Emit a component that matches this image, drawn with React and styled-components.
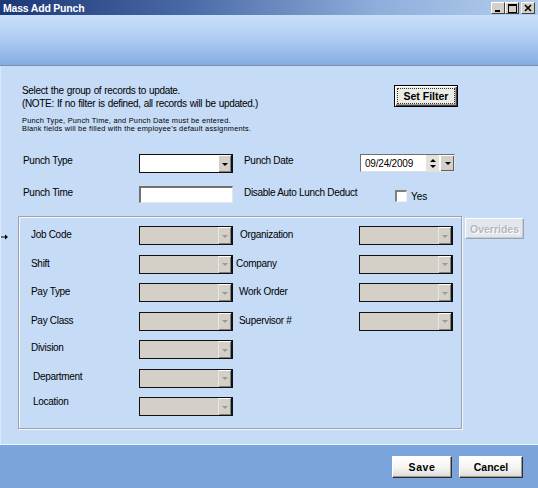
import React from "react";
import styled, { createGlobalStyle } from "styled-components";

const Global = createGlobalStyle`
  html, body { margin: 0; padding: 0; background: #c5dbf6; }
  body { width: 538px; height: 488px; overflow: hidden; font-family: "Liberation Sans", Arial, sans-serif; }
  * { box-sizing: border-box; }
`;

const Window = styled.div`
  width: 538px;
  height: 488px;
  display: flex;
  flex-direction: column;
  background: #c5dbf6;
  position: relative;
`;

const TitleBar = styled.div`
  height: 15px;
  flex: none;
  display: flex;
  align-items: center;
  justify-content: space-between;
  padding: 0 3px 0 3px;
  background: linear-gradient(90deg, #1b3778 0%, #4a6aa6 35%, #8eaedb 70%, #b3cdee 100%);
`;

const Title = styled.span`
  color: #fff;
  font-weight: bold;
  font-size: 10.5px;
  letter-spacing: -0.2px;
`;

const Controls = styled.div`
  display: flex;
  margin-top: 1px;
`;

const CtlBtn = styled.div`
  width: 14px;
  height: 12px;
  margin-left: ${(p) => (p.$gap ? "2px" : "0")};
  background: #d4d0c8;
  border-top: 1px solid #fff;
  border-left: 1px solid #fff;
  border-right: 1px solid #404040;
  border-bottom: 1px solid #404040;
  display: flex;
  align-items: center;
  justify-content: center;
`;

const Banner = styled.div`
  height: 51px;
  flex: none;
  background: linear-gradient(180deg, #c9dffa 0%, #b1cdf2 45%, #86ade2 100%);
  border-bottom: 1px solid #7d8fa6;
`;

const Body = styled.div`
  height: 378px;
  flex: none;
  position: relative;
  padding: 19px 0 0 17px;
  display: flex;
  flex-direction: column;
  border-left: 1px solid #dce9fa;
`;

const IntroRow = styled.div`
  display: grid;
  grid-template-columns: 372px auto;
  align-items: start;
  padding-left: 4px;
`;

const Intro = styled.div`
  color: #000;
`;

const Para = styled.div`
  font-size: 10px;
  line-height: 12.5px;
  letter-spacing: -0.34px;
  word-spacing: 0.6px;
`;

const Small = styled.div`
  margin-top: 7px;
  font-size: 7.4px;
  line-height: 7.5px;
  letter-spacing: 0.22px;
`;

const RaisedButton = styled.button`
  font-family: "Liberation Sans", Arial, sans-serif;
  font-weight: bold;
  font-size: 10.5px;
  padding: 0;
  width: ${(p) => p.$w}px;
  height: ${(p) => p.$h}px;
  margin: ${(p) => p.$m || "0"};
  color: ${(p) => (p.disabled ? "#b4b8bc" : "#000")};
  text-shadow: ${(p) => (p.disabled ? "1px 1px 0 #fff" : "none")};
  background: ${(p) =>
    p.disabled ? "#e2e7ee" : "linear-gradient(180deg, #ffffff 0%, #f4f4f2 55%, #dddbd6 100%)"};
  border-top: 1px solid #fff;
  border-left: 1px solid #fff;
  border-right: 1px solid ${(p) => (p.disabled ? "#9aa4b0" : "#303030")};
  border-bottom: 1px solid ${(p) => (p.disabled ? "#9aa4b0" : "#303030")};
  box-shadow: ${(p) => (p.disabled ? "inset -1px -1px 0 #c8ccd2" : "inset -1px -1px 0 #9a9890")};
  letter-spacing: ${(p) => p.$ls || "0"};
`;

const FilterButton = styled.button`
  font-family: "Liberation Sans", Arial, sans-serif;
  font-weight: bold;
  font-size: 10.5px;
  width: 64px;
  height: 22px;
  padding: 2px;
  background: #ecebe6;
  border: 1px solid #000;
  box-shadow: inset 1px 1px 0 #fff, inset -1px -1px 0 #404040, inset -2px -2px 0 #a0a0a0;
  color: #000;
  display: flex;
`;

const Focus = styled.span`
  flex: 1;
  display: flex;
  align-items: center;
  justify-content: center;
  border: 1px dotted #333;
`;

const TopGrid = styled.div`
  margin-top: 22px;
  display: grid;
  grid-template-columns: 116px 94px 127px auto;
  row-gap: 13px;
  padding-left: 5px;
`;

const Label = styled.div`
  font-size: 10px;
  letter-spacing: -0.3px;
  color: #000;
  padding-left: ${(p) => p.$indent || 0}px;
  align-self: ${(p) => p.$align || "start"};
  position: relative;
  top: ${(p) => p.$dy || 0}px;
  white-space: nowrap;
  padding-top: ${(p) => (p.$align ? 0 : 1)}px;
`;

const SelectBox = styled.div`
  width: 94px;
  height: 19px;
  display: flex;
  background: ${(p) => (p.$disabled ? "#d4d0c8" : "#fff")};
  border: 1px solid #111;
  border-right-width: 2px;
`;

const SelectField = styled.div`
  flex: 1;
`;

const ArrowBtn = styled.div`
  width: 13px;
  flex: none;
  background: #d4d0c8;
  border-left: 1px solid ${(p) => (p.$disabled ? "#e8e6e0" : "#fff")};
  border-top: 1px solid #fff;
  display: flex;
  align-items: center;
  justify-content: center;
  box-shadow: inset -1px -1px 0 #808080;
`;

const Tri = styled.div`
  width: 0;
  height: 0;
  border-left: 3px solid transparent;
  border-right: 3px solid transparent;
  border-top: 3px solid ${(p) => (p.$disabled ? "#9a9a9a" : "#000")};
`;

const TriUp = styled.div`
  width: 0;
  height: 0;
  border-left: 3px solid transparent;
  border-right: 3px solid transparent;
  border-bottom: 3px solid #000;
`;

const TextInput = styled.div`
  width: 94px;
  height: 17px;
  background: #fff;
  border-top: 2px solid #707070;
  border-left: 2px solid #707070;
  border-right: 1px solid #e6e6e6;
  border-bottom: 1px solid #e6e6e6;
`;

const DateBox = styled.div`
  width: 95px;
  height: 18px;
  background: #fff;
  border-top: 1px solid #707070;
  border-left: 1px solid #707070;
  border-right: 1px solid #e0e0e0;
  border-bottom: 1px solid #e0e0e0;
  display: flex;
  align-items: center;
  padding-left: 4px;
`;

const DateText = styled.span`
  font-size: 10px;
  letter-spacing: -0.2px;
  flex: 1;
`;

const Spin = styled.div`
  width: 14px;
  height: 16px;
  display: flex;
  flex-direction: column;
  justify-content: space-around;
  align-items: center;
  background: #e4e2dc;
  border-left: 1px solid #fff;
  padding: 2px 0;
`;

const DateDrop = styled.div`
  width: 14px;
  height: 16px;
  margin-left: 1px;
  background: #d4d0c8;
  border-top: 1px solid #fff;
  border-left: 1px solid #fff;
  box-shadow: inset -1px -1px 0 #606060;
  display: flex;
  align-items: center;
  justify-content: center;
`;

const CheckRow = styled.div`
  display: flex;
  align-items: center;
  gap: 4px;
  margin-left: 35px;
  margin-top: 3px;
  font-size: 10px;
`;

const CheckBox = styled.div`
  width: 12px;
  height: 12px;
  background: #fff;
  border-top: 2px solid #808080;
  border-left: 2px solid #808080;
  border-right: 1px solid #f0f0f0;
  border-bottom: 1px solid #f0f0f0;
`;

const GroupRow = styled.div`
  margin-top: 13px;
  display: flex;
  align-items: flex-start;
`;

const GroupBox = styled.div`
  width: 444px;
  height: 213px;
  border: 1px solid #9aa3ad;
  box-shadow: inset 1px 1px 0 #f4f8fd, 1px 1px 0 #f4f8fd;
  padding: 9px 0 0 12px;
  display: grid;
  grid-template-columns: 108px 94px 126px 94px;
  grid-auto-rows: 19px;
  row-gap: 9.5px;
`;

const Marker = styled.svg`
  position: absolute;
  left: 0;
  top: 168px;
`;

const Footer = styled.div`
  flex: 1;
  border-top: 1px solid #eef5fe;
  background: #7ba3dc;
  display: flex;
  justify-content: flex-end;
  align-items: flex-start;
  padding: 11px 15px 0 0;
  gap: 7px;
`;

const Select = ({ disabled }) => (
  <SelectBox $disabled={disabled}>
    <SelectField />
    <ArrowBtn $disabled={disabled}>
      <Tri $disabled={disabled} />
    </ArrowBtn>
  </SelectBox>
);

const rows = [
  ["Job Code", 0, 0, "Organization", 7],
  ["Shift", 0, 0, "Company", 3],
  ["Pay Type", 0, 0, "Work Order", 6],
  ["Pay Class", 0, 0, "Supervisor #", 6],
  ["Division", 0, -1],
  ["Department", 2, -1],
  ["Location", 2, -4],
];

export default function App() {
  return (
    <>
      <Global />
      <Window>
        <TitleBar>
          <Title>Mass Add Punch</Title>
          <Controls>
            <CtlBtn>
              <svg width="8" height="8" viewBox="0 0 8 8">
                <rect x="1" y="6" width="5" height="2" fill="#000" />
              </svg>
            </CtlBtn>
            <CtlBtn>
              <svg width="9" height="9" viewBox="0 0 9 9">
                <rect x="0.5" y="0.5" width="8" height="8" fill="none" stroke="#000" />
                <rect x="0" y="0" width="9" height="2" fill="#000" />
              </svg>
            </CtlBtn>
            <CtlBtn $gap>
              <svg width="8" height="8" viewBox="0 0 8 8">
                <path d="M1 1 L7 7 M7 1 L1 7" stroke="#000" strokeWidth="1.6" />
              </svg>
            </CtlBtn>
          </Controls>
        </TitleBar>
        <Banner />
        <Body>
          <IntroRow>
            <Intro>
              <Para>Select the group of records to update.</Para>
              <Para>(NOTE: If no filter is defined, all records will be updated.)</Para>
              <Small>
                Punch Type, Punch Time, and Punch Date must be entered.
                <br />
                Blank fields will be filled with the employee’s default assignments.
              </Small>
            </Intro>
            <FilterButton>
              <Focus>Set Filter</Focus>
            </FilterButton>
          </IntroRow>

          <TopGrid>
            <Label>Punch Type</Label>
            <Select />
            <Label $indent={11}>Punch Date</Label>
            <DateBox>
              <DateText>09/24/2009</DateText>
              <Spin>
                <TriUp />
                <Tri />
              </Spin>
              <DateDrop>
                <Tri />
              </DateDrop>
            </DateBox>

            <Label>Punch Time</Label>
            <TextInput />
            <Label $indent={11}>Disable Auto Lunch Deduct</Label>
            <CheckRow>
              <CheckBox />
              <span>Yes</span>
            </CheckRow>
          </TopGrid>

          <GroupRow>
            <GroupBox>
              {rows.map(([l1, ind1, dy1, l2, ind2]) => (
                <React.Fragment key={l1}>
                  <Label $align="center" $indent={ind1} $dy={dy1 - 1}>
                    {l1}
                  </Label>
                  <Select disabled />
                  {l2 ? (
                    <>
                      <Label $align="center" $indent={ind2} $dy={-1}>
                        {l2}
                      </Label>
                      <Select disabled />
                    </>
                  ) : (
                    <>
                      <span />
                      <span />
                    </>
                  )}
                </React.Fragment>
              ))}
            </GroupBox>
            <RaisedButton disabled $w={59} $h={21} $m="2px 0 0 3px">
              Overrides
            </RaisedButton>
          </GroupRow>

          <Marker width="8" height="6" viewBox="0 0 8 6">
            <path d="M0 3 H6" stroke="#000" strokeWidth="1" />
            <path d="M4 0.5 L7 3 L4 5.5 Z" fill="#000" />
          </Marker>
        </Body>
        <Footer>
          <RaisedButton $w={60} $h={22} $ls="0.6px">
            Save
          </RaisedButton>
          <RaisedButton $w={64} $h={22}>
            Cancel
          </RaisedButton>
        </Footer>
      </Window>
    </>
  );
}
